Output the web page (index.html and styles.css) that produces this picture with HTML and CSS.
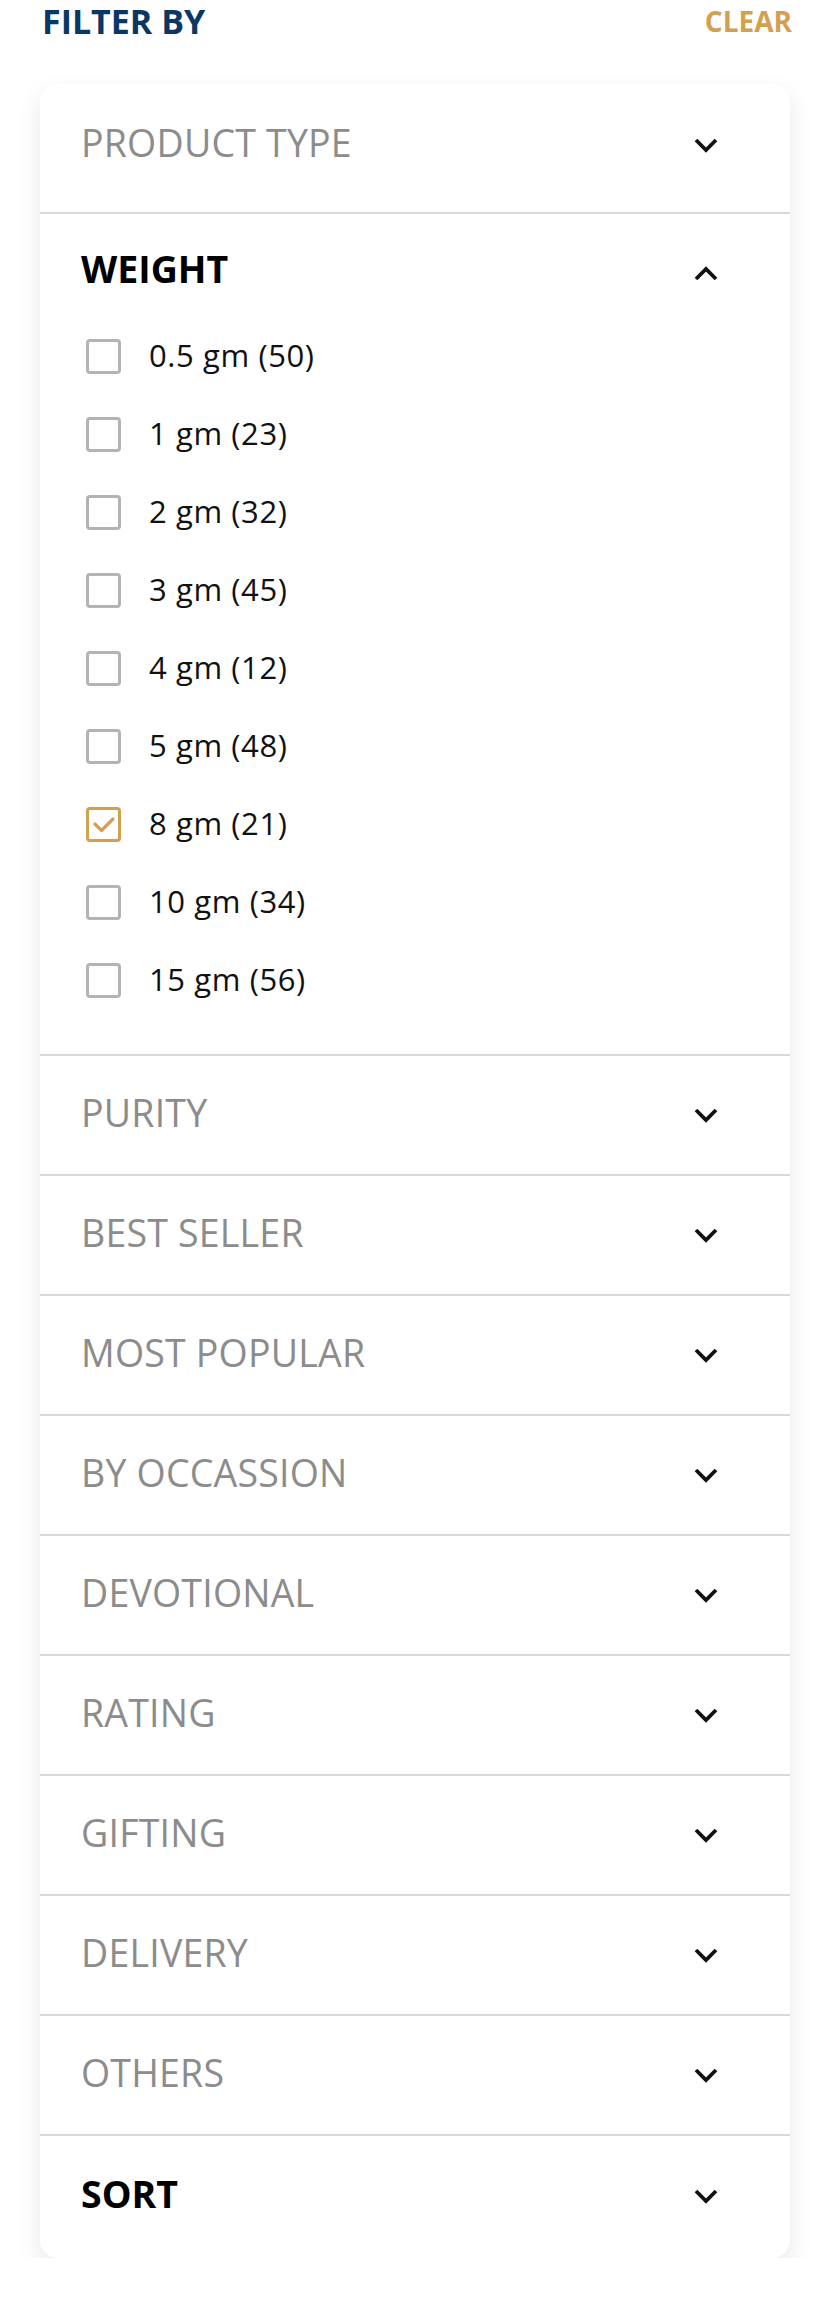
FILE: index.html
```html
<!DOCTYPE html>
<html lang="en">
<head>
<meta charset="utf-8">
<title>Filter</title>
<link rel="stylesheet" href="styles.css">
</head>
<body>
<div class="page">
  <div class="topbar">
    <span class="title">FILTER BY</span>
    <span class="clear">CLEAR</span>
  </div>
  <div class="card">
    <div class="row first">
      <span class="label">PRODUCT TYPE</span>
      <svg class="chev" viewBox="0 0 24 15" width="24" height="15"><polyline points="2,2 12,12 22,2"/></svg>
    </div>
    <div class="section">
      <div class="sec-head">
        <span class="label active">WEIGHT</span>
        <svg class="chev up" viewBox="0 0 24 15" width="24" height="15"><polyline points="2,13 12,3 22,13"/></svg>
      </div>
      <ul class="opts">
        <li class="opt"><span class="box"></span><span class="opt-text">0.5 gm (50)</span></li>
        <li class="opt"><span class="box"></span><span class="opt-text">1 gm (23)</span></li>
        <li class="opt"><span class="box"></span><span class="opt-text">2 gm (32)</span></li>
        <li class="opt"><span class="box"></span><span class="opt-text">3 gm (45)</span></li>
        <li class="opt"><span class="box"></span><span class="opt-text">4 gm (12)</span></li>
        <li class="opt"><span class="box"></span><span class="opt-text">5 gm (48)</span></li>
        <li class="opt"><span class="box checked"><svg viewBox="0 0 29 29" width="29" height="29"><polyline points="6,14 12.5,20.5 24,9"/></svg></span><span class="opt-text">8 gm (21)</span></li>
        <li class="opt"><span class="box"></span><span class="opt-text">10 gm (34)</span></li>
        <li class="opt"><span class="box"></span><span class="opt-text">15 gm (56)</span></li>
      </ul>
    </div>
    <div class="row"><span class="label">PURITY</span><svg class="chev" viewBox="0 0 24 15" width="24" height="15"><polyline points="2,2 12,12 22,2"/></svg></div>
    <div class="row"><span class="label">BEST SELLER</span><svg class="chev" viewBox="0 0 24 15" width="24" height="15"><polyline points="2,2 12,12 22,2"/></svg></div>
    <div class="row"><span class="label">MOST POPULAR</span><svg class="chev" viewBox="0 0 24 15" width="24" height="15"><polyline points="2,2 12,12 22,2"/></svg></div>
    <div class="row"><span class="label">BY OCCASSION</span><svg class="chev" viewBox="0 0 24 15" width="24" height="15"><polyline points="2,2 12,12 22,2"/></svg></div>
    <div class="row"><span class="label">DEVOTIONAL</span><svg class="chev" viewBox="0 0 24 15" width="24" height="15"><polyline points="2,2 12,12 22,2"/></svg></div>
    <div class="row"><span class="label">RATING</span><svg class="chev" viewBox="0 0 24 15" width="24" height="15"><polyline points="2,2 12,12 22,2"/></svg></div>
    <div class="row"><span class="label">GIFTING</span><svg class="chev" viewBox="0 0 24 15" width="24" height="15"><polyline points="2,2 12,12 22,2"/></svg></div>
    <div class="row"><span class="label">DELIVERY</span><svg class="chev" viewBox="0 0 24 15" width="24" height="15"><polyline points="2,2 12,12 22,2"/></svg></div>
    <div class="row"><span class="label">OTHERS</span><svg class="chev" viewBox="0 0 24 15" width="24" height="15"><polyline points="2,2 12,12 22,2"/></svg></div>
    <div class="row last"><span class="label active">SORT</span><svg class="chev" viewBox="0 0 24 15" width="24" height="15"><polyline points="2,2 12,12 22,2"/></svg></div>
  </div>
</div>
</body>
</html>
```
FILE: styles.css
```css
* { box-sizing: border-box; }
html, body { margin: 0; padding: 0; background: #ffffff; }
body { font-family: "Open Sans", "Noto Sans", sans-serif; }

.page { padding: 0 40px; }

.topbar {
  height: 42px;
  display: flex;
  align-items: center;
  justify-content: space-between;
  padding-left: 2px;
}
.title {
  font-size: 34px;
  font-weight: 700;
  color: #0a3866;
  line-height: 1;
}
.clear {
  font-size: 28px;
  font-weight: 700;
  color: #d3a04f;
  line-height: 1;
  margin-right: -2px;
}

.card {
  margin-top: 42px;
  background: #fff;
  border-radius: 18px;
  box-shadow: 0 10px 26px rgba(0, 0, 0, 0.09);
}

.row {
  height: 120px;
  border-top: 2px solid #d9d9d9;
  display: flex;
  align-items: center;
  justify-content: space-between;
  padding: 0 72px 0 41px;
}
.row .label { margin-bottom: 4px; }
.row.first { border-top: none; height: 128px; padding-bottom: 6px; }
.row.last { height: 124px; padding-bottom: 2px; }

.label {
  font-size: 37.5px;
  line-height: 1;
  color: #8c8c8c;
  font-weight: 400;
  letter-spacing: 0.2px;
}
.label.active { color: #000; font-weight: 700; letter-spacing: 0; }

.chev { display: block; flex: none; }
.chev polyline {
  fill: none;
  stroke: #111;
  stroke-width: 3.8;
  stroke-linejoin: miter;
}
.chev.up { margin-top: 10px; }

.section { border-top: 2px solid #d9d9d9; padding-bottom: 35px; }
.sec-head {
  height: 103px;
  padding: 6px 72px 0 41px;
  display: flex;
  align-items: center;
  justify-content: space-between;
}

.opts { list-style: none; margin: 0; padding: 0 0 0 46px; }
.opt {
  height: 78px;
  display: flex;
  align-items: center;
}
.box {
  width: 35px;
  height: 35px;
  border: 3px solid #b3b3b3;
  border-radius: 4px;
  flex: none;
  display: block;
}
.box.checked { border-color: #d3a04f; }
.box svg { display: block; }
.box svg polyline {
  fill: none;
  stroke: #d3a04f;
  stroke-width: 3.2;
  stroke-linecap: round;
  stroke-linejoin: round;
}
.opt-text {
  margin-left: 28px;
  margin-bottom: 2px;
  font-size: 31px;
  line-height: 1;
  color: #111;
  letter-spacing: 0.6px;
}
```
